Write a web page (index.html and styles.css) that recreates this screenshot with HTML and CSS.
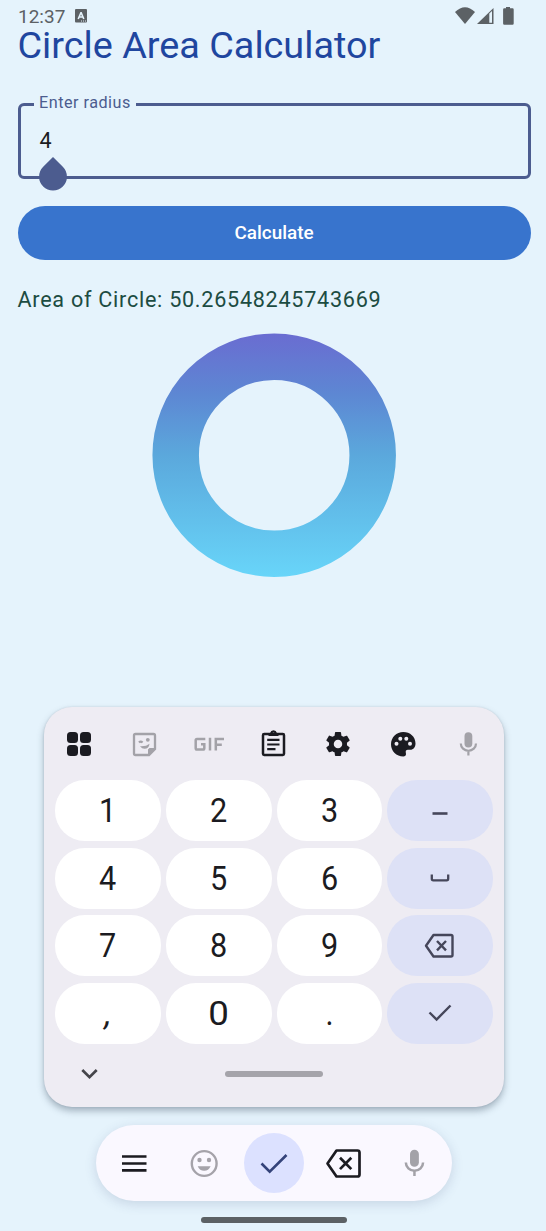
FILE: index.html
```html
<!DOCTYPE html>
<html lang="en">
<head>
<meta charset="utf-8">
<title>Circle Area Calculator</title>
<link rel="stylesheet" href="styles.css">
</head>
<body>
<div class="screen">
  <header class="status">
    <span class="clock">12:37</span>
    <svg class="status-app" width="12" height="14" viewBox="0 0 12 14"><rect width="12" height="13.5" rx="1" fill="#5c6165"/><path d="M3.2 10 5.9 3.7h.3L8.8 10M4.2 8h3.6" fill="none" stroke="#e5f3fc" stroke-width="1.6"/><path d="M6 12h5" stroke="#e5f3fc" stroke-width="1" stroke-dasharray="1 1"/></svg>
    <svg class="status-icons" width="60" height="19" viewBox="0 0 60 19" fill="#5c6165"><path d="M0 5Q10-4.600 20 5L10 17Z"/><path fill-rule="evenodd" d="M22 17 38.500 1V17ZM34.300 6.500V15.800H37V4Z"/><path d="M51 0h4v1.200h2.500q1.200 0 1.200 1.200v14q0 1.300-1.200 1.300h-8.200q-1.200 0-1.200-1.300v-14q0-1.200 1.200-1.200H51Z"/></svg>
  </header>

  <main class="content">
    <h1 class="title">Circle Area Calculator</h1>
    <div class="field">
      <label class="field-label">Enter radius</label>
      <span class="field-value">4</span>
      <svg class="handle" width="28" height="34" viewBox="0 0 28 34"><path d="M14 0 23.800 9.800A13.900 13.900 0 1 1 4.200 9.800Z" fill="#4c5c8f"/></svg>
    </div>
    <button class="calculate">Calculate</button>
    <p class="result">Area of Circle: 50.26548245743669</p>
    <svg class="ring" width="244" height="244" viewBox="0 0 244 244">
      <defs><linearGradient id="ringFill" x1="0" y1="0" x2="0" y2="244" gradientUnits="userSpaceOnUse"><stop offset="0" stop-color="#6a6cd1"/><stop offset=".25" stop-color="#5d87d3"/><stop offset=".5" stop-color="#5ba8dc"/><stop offset="1" stop-color="#68d5f9"/></linearGradient></defs>
      <circle cx="122.200" cy="122.200" r="98.500" fill="none" stroke="url(#ringFill)" stroke-width="46.500"/>
    </svg>
  </main>

  <section class="keyboard">
    <div class="tools">
      <svg width="30" height="30" viewBox="0 0 30 30" fill="#1b1b21"><rect x="3" y="3" width="11" height="11" rx="3.500"/><rect x="16" y="3" width="11" height="11" rx="3.500"/><rect x="3" y="16" width="11" height="11" rx="3.500"/><rect x="16" y="16" width="11" height="11" rx="3.500"/></svg>
      <svg width="30" height="30" viewBox="0 0 30 30" fill="none" stroke="#a3a2a8" stroke-width="2.300"><path d="M6.500 5h18q1.500 0 1.500 1.500V20L20 26H6.500Q5 26 5 24.500v-18Q5 5 6.500 5Z"/><path d="M26 19.500h-5q-1.500 0-1.500 1.500v5Z" fill="#a3a2a8" stroke-width="1"/><path d="M10 13.500q1.700-1.700 3.600 0" stroke-width="2.300"/><circle cx="18.800" cy="10.800" r="1.900" fill="#a3a2a8" stroke="none"/><path d="M11 17.300q6 .5 9.500-2.500-.5 5-5 5-2.500 0-4.500-2.500Z" fill="#a3a2a8" stroke="none"/></svg>
      <svg width="30" height="30" viewBox="0 0 30 30" fill="none" stroke="#a3a2a8" stroke-width="2.500"><path d="M11.300 10H3q-1.300 0-1.300 1.300v8Q1.700 20.600 3 20.600h6q1.300 0 1.300-1.300V15.200H7M16 8.700V21.500M21.800 21.500V10H30M21.800 15.700h6"/></svg>
      <svg width="30" height="30" viewBox="0 0 30 30" fill="none" stroke="#1b1b21" stroke-width="2.500"><rect x="5" y="5" width="21" height="21" rx="1.200"/><path d="M9.200 10.800H21.500M9.200 15.500H21.500M9.200 20.200H17.500" stroke-width="2.200"/><path fill="#1b1b21" stroke="none" fill-rule="evenodd" d="M10.500 7V4h1.600a3.500 3.500 0 0 1 6.800 0h1.600v3Z M15.500 3.400a1.200 1.200 0 1 0 .01 0Z"/></svg>
      <svg width="30" height="30" viewBox="0 0 24 24" fill="#1b1b21"><path d="M19.140 12.940c.04-.3.060-.61.060-.94 0-.32-.02-.64-.07-.94l2.030-1.580c.18-.14.230-.41.120-.61l-1.920-3.320c-.12-.22-.37-.29-.59-.22l-2.390.96c-.5-.38-1.030-.7-1.620-.94l-.36-2.540c-.04-.24-.24-.41-.48-.41h-3.840c-.24 0-.43.17-.47.410l-.36 2.540c-.59.24-1.130.57-1.620.94l-2.390-.96c-.22-.08-.47 0-.59.22L2.740 8.870c-.12.210-.08.470.12.610l2.030 1.580c-.05.300-.09.630-.09.940s.02.640.07.940l-2.030 1.580c-.18.140-.23.410-.12.610l1.920 3.320c.12.220.37.290.59.220l2.390-.96c.5.380 1.030.7 1.620.94l.36 2.540c.05.240.24.410.48.410h3.840c.24 0 .44-.17.47-.41l.36-2.540c.59-.24 1.130-.56 1.620-.94l2.390.96c.22.080.47 0 .59-.22l1.920-3.320c.12-.22.070-.47-.12-.61l-2.010-1.580zM12 15.400a3.400 3.400 0 1 1 0-6.800 3.400 3.400 0 0 1 0 6.800z" fill-rule="evenodd"/></svg>
      <svg width="30" height="30" viewBox="0 0 30 30"><path d="M15.300 3C8.500 3 3 8.300 3 15.200S8.500 27.500 15.300 27.500c1.800 0 2.700-1 2.700-2.500 0-.8-.3-1.300-.3-2.300 0-1.200 1-1.900 2-1.900h2.500c3.300 0 5.300-2.800 5.300-6.300C27.500 7.700 22 3 15.300 3Z" fill="#1b1b21"/><g fill="#eeecf3"><circle cx="8.500" cy="14.800" r="2"/><circle cx="12.300" cy="9.700" r="2"/><circle cx="18.300" cy="9.700" r="2"/><circle cx="22" cy="14.800" r="2"/></g></svg>
      <svg width="30" height="30" viewBox="0 0 30 30"><use href="#mic"/></svg>
    </div>

    <div class="keys">
      <span class="key"><b class="digit">1</b></span><span class="key"><b class="digit">2</b></span><span class="key"><b class="digit">3</b></span>
      <span class="key side"><svg width="32" height="32" viewBox="0 0 32 32"><path d="M8.500 18.500h15" stroke="#45465a" stroke-width="2.600"/></svg></span>
      <span class="key"><b class="digit">4</b></span><span class="key"><b class="digit">5</b></span><span class="key"><b class="digit">6</b></span>
      <span class="key side"><svg width="32" height="32" viewBox="0 0 32 32"><path d="M7.800 12.500v4.300q0 1.500 1.500 1.500h13.400q1.500 0 1.500-1.500V12.500" fill="none" stroke="#45465a" stroke-width="2.300"/></svg></span>
      <span class="key"><b class="digit">7</b></span><span class="key"><b class="digit">8</b></span><span class="key"><b class="digit">9</b></span>
      <span class="key side"><svg width="32" height="32" viewBox="0 0 32 32" fill="none" stroke="#45465a" stroke-width="2.400" stroke-linejoin="round"><path d="M9.500 5H27q1.500 0 1.500 1.500V25q0 1.500-1.500 1.500H9.500L2 15.800Z"/><path d="M13 11l9 9.300m0-9.300-9 9.300"/></svg></span>
      <span class="key"><b class="digit comma">,</b></span><span class="key"><b class="digit zero">0</b></span><span class="key"><b class="digit">.</b></span>
      <span class="key side"><svg width="32" height="32" viewBox="0 0 32 32"><path d="M5.500 15.500 12.600 22.500 26.500 8.500" fill="none" stroke="#45465a" stroke-width="2.400"/></svg></span>
    </div>

    <div class="key-footer">
      <svg width="18" height="12" viewBox="0 0 18 12"><path d="M1.300 2 8.500 9.200 15.700 2" fill="none" stroke="#45454a" stroke-width="2.700"/></svg>
      <span class="grip"></span>
    </div>
  </section>

  <nav class="dock">
    <svg width="36" height="36" viewBox="0 0 36 36"><path d="M6 11.500h24.500M6 18.500h24.500M6 25.300h24.500" stroke="#1b1b21" stroke-width="2.700"/></svg>
    <svg width="36" height="36" viewBox="0 0 36 36"><circle cx="18.200" cy="18.500" r="12.400" fill="none" stroke="#a5a3aa" stroke-width="2.400"/><g fill="#a5a3aa"><circle cx="13.500" cy="15" r="2.200"/><circle cx="23" cy="15" r="2.200"/><path d="M11.700 21.200h12.900q-2 4.500-6.450 4.500t-6.450-4.500Z"/></g></svg>
    <span class="confirm"><svg width="36" height="36" viewBox="0 0 36 36"><path d="M5.500 18.500 13.700 26.700 30.500 10" fill="none" stroke="#34437a" stroke-width="2.600"/></svg></span>
    <svg width="36" height="36" viewBox="0 0 36 36" fill="none" stroke="#1b1b21" stroke-width="2.700" stroke-linejoin="round"><path d="M10.500 5.500H31.500q2 0 2 2V29.500q0 2-2 2H10.500L1.500 18.500Z"/><path d="M14 12.800 25.300 24.100M25.300 12.800 14 24.100"/></svg>
    <svg width="34" height="34" viewBox="0 0 30 30"><g id="mic"><rect x="11.500" y="3.200" width="7.800" height="15.200" rx="3.900" fill="#a3a2a8"/><path d="M7.800 14.500a7.600 7.300 0 0 0 15.200 0M15.400 21.500v5" fill="none" stroke="#a3a2a8" stroke-width="2.200"/></g></svg>
  </nav>
  <div class="home-bar"></div>
</div>
</body>
</html>
```
FILE: styles.css
```css
* { box-sizing: border-box; }

body {
  margin: 0;
  background: #e5f3fc;
  font-family: Roboto, "Liberation Sans", sans-serif;
}

svg { display: block; flex: none; overflow: visible; }

.screen {
  display: flex;
  flex-direction: column;
  width: 546px;
  height: 1231px;
  overflow: hidden;
}

.status {
  display: flex;
  height: 25px;
  padding: 7px 31px 0 18px;
  color: #5c6165;
}

.clock { width: 57px; font-size: 19px; line-height: 19px; }
.status-app { margin-top: 2px; }
.status-icons { margin-left: auto; }

.content {
  display: flex;
  flex-direction: column;
  height: 681px;
  padding: 0 15.500px 0 17.500px;
}

.title {
  margin: 0;
  color: #1f469f;
  font-size: 37.800px;
  font-weight: 400;
  line-height: 40px;
  white-space: nowrap;
}

.field {
  position: relative;
  height: 76px;
  margin-top: 38px;
  padding: 22px 19px;
  border: 3px solid #4c5c8f;
  border-radius: 6px;
}

.field-label {
  position: absolute;
  top: -13px;
  left: 13px;
  padding: 0 5.500px;
  background: #e5f3fc;
  color: #4c5c8f;
  font-size: 16.200px;
  line-height: 20px;
  letter-spacing: .5px;
}

.field-value { display: block; color: #1b1b21; font-size: 21.500px; line-height: 26px; }
.handle { position: absolute; left: 18px; top: 51px; }

.calculate {
  height: 54px;
  flex: none;
  margin-top: 27px;
  padding: 0 0 1px;
  border: 0;
  border-radius: 27px;
  background: #3874cd;
  color: #fff;
  font: 500 18.900px/52px Roboto, sans-serif;
}

.result {
  margin: 24px 0 0;
  color: #1c4c42;
  font-size: 21.600px;
  line-height: 32px;
  letter-spacing: .73px;
  white-space: nowrap;
}

.ring { align-self: center; margin-top: 17px; }

.keyboard {
  flex: none;
  width: 460px;
  height: 400px;
  margin: 1px 0 0 44px;
  border-radius: 28px;
  background: #eeecf3;
  box-shadow: 0 4px 7px rgba(40, 60, 80, .35), 0 0 2px rgba(40, 60, 80, .15);
}

.tools {
  display: grid;
  grid-template-columns: repeat(7, 1fr);
  align-items: center;
  justify-items: center;
  height: 73px;
  padding: 1px 4px 0 3px;
}

.keys {
  display: grid;
  grid-template-columns: repeat(4, 1fr);
  grid-auto-rows: 61px;
  gap: 6.500px 5px;
  padding: 0 11px;
}

.key {
  display: flex;
  align-items: center;
  justify-content: center;
  border-radius: 30px;
  background: #fff;
  color: #1b1b21;
  font-size: 34px;
  line-height: 61px;
}

/* Keypad numerals are condensed slightly, except for the round zero. */
.digit { font-weight: 400; transform: scaleX(.9); }
.digit.zero { transform: scaleX(1.080); }
.digit.comma { transform: skewX(-10deg); }

.side { background: #dde1f6; }

.key-footer {
  display: grid;
  grid-template-columns: 18px 98px;
  column-gap: 126px;
  align-items: center;
  padding: 24px 0 0 37px;
}

.grip { height: 6px; border-radius: 3px; background: #a5a4aa; }

.dock {
  display: grid;
  grid-template-columns: repeat(5, 70px);
  justify-content: center;
  align-items: center;
  justify-items: center;
  flex: none;
  width: 356px;
  height: 76px;
  margin: 18px 0 0 96px;
  border-radius: 38px;
  background: #faf8ff;
  box-shadow: 0 3px 12px rgba(60, 80, 120, .18);
}

.confirm {
  display: flex;
  align-items: center;
  justify-content: center;
  width: 60px;
  height: 60px;
  border-radius: 50%;
  background: #dce1ff;
}

.home-bar {
  flex: none;
  width: 146px;
  height: 6px;
  margin: 16px 0 0 201px;
  border-radius: 3px;
  background: #5c6165;
}
```
